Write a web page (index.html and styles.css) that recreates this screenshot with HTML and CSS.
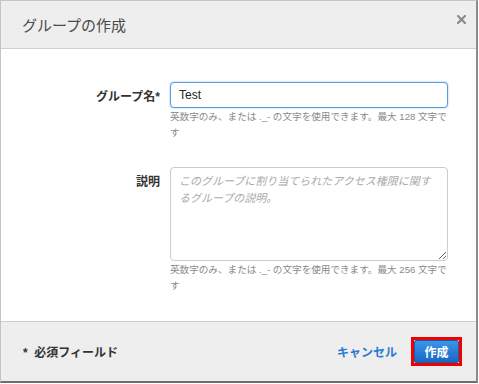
FILE: index.html
```html
<!DOCTYPE html>
<html lang="ja">
<head>
    <meta charset="UTF-8">
    <title>グループの作成</title>
    <link rel="stylesheet" href="styles.css">
</head>
<body>
    <div class="modal">
        <div class="modal-header">
            <h2 class="modal-title">グループの作成</h2>
            <button class="modal-close" aria-label="閉じる">
                <svg width="9" height="9" viewBox="0 0 9 9">
                    <path d="M1 1 L8 8 M8 1 L1 8" stroke="#8a8a8a" stroke-width="2.2" stroke-linecap="square"/>
                </svg>
            </button>
        </div>

        <div class="modal-body">
            <div class="form-row">
                <label class="form-label" for="group-name">グループ名*</label>
                <div class="form-field">
                    <input id="group-name" class="text-input" type="text" value="Test">
                    <p class="help-text">英数字のみ、または ._- の文字を使用できます。最大 128 文字です</p>
                </div>
            </div>

            <div class="form-row">
                <label class="form-label" for="group-desc">説明</label>
                <div class="form-field">
                    <textarea id="group-desc" class="text-area" placeholder="このグループに割り当てられたアクセス権限に関するグループの説明。"></textarea>
                    <p class="help-text">英数字のみ、または ._- の文字を使用できます。最大 256 文字です</p>
                </div>
            </div>
        </div>

        <div class="modal-footer">
            <span class="required-note">*&nbsp;&nbsp;必須フィールド</span>
            <div class="footer-actions">
                <a href="#" class="cancel-link">キャンセル</a>
                <span class="btn-focus">
                    <button class="btn-primary">作成</button>
                </span>
            </div>
        </div>
    </div>
</body>
</html>
```

FILE: styles.css
```css
:root {
    --panel-bg: #eeeeee;
    --line-color: #cfcfcf;
    --text-color: #444;
    --help-color: #8a8a8a;
    --link-color: #2b7bd1;
}

* {
    margin: 0;
    padding: 0;
    box-sizing: border-box;
}

body {
    font-family: 'Liberation Sans', 'Noto Sans CJK JP', sans-serif;
    color: var(--text-color);
    background-color: #fff;
}

.modal {
    width: 478px;
    height: 383px;
    border: 1px solid #c4c4c4;
    border-right: 2px solid #8c8c8c;
    border-bottom: 2px solid #6e6e6e;
    display: flex;
    flex-direction: column;
    background-color: #fff;
}

.modal-header {
    height: 48px;
    flex-shrink: 0;
    background-color: var(--panel-bg);
    border-bottom: 1px solid var(--line-color);
    display: flex;
    justify-content: space-between;
    padding: 0 10px 0 21px;
}

.modal-title {
    font-size: 15px;
    font-weight: normal;
    color: #4a4a4a;
    line-height: 50px;
}

.modal-close {
    border: none;
    background: none;
    align-self: flex-start;
    margin-top: 11px;
    cursor: pointer;
}

.modal-body {
    flex: 1;
    padding-top: 33px;
    display: flex;
    flex-direction: column;
    gap: 26px;
}

.form-row {
    display: grid;
    grid-template-columns: 159px 278px;
    gap: 10px;
}

.form-label {
    text-align: right;
    font-size: 12px;
    font-weight: bold;
    color: #333;
    padding-top: 5px;
}

.text-input {
    width: 100%;
    height: 26px;
    border: 1px solid #5b9be0;
    border-radius: 4px;
    box-shadow: 0 0 2px rgba(70, 140, 230, 0.6);
    padding: 0 8px;
    font-family: inherit;
    font-size: 12px;
    color: #222;
    outline: none;
}

.text-area {
    width: 100%;
    height: 94px;
    border: 1px solid #cccccc;
    border-radius: 4px;
    padding: 5px 8px;
    font-family: inherit;
    font-size: 11px;
    line-height: 17px;
    resize: vertical;
    display: block;
}

.text-area::placeholder {
    color: #aaaaaa;
    font-style: italic;
}

.help-text {
    font-size: 9.6px;
    line-height: 16px;
    color: var(--help-color);
    margin-top: 1px;
}

.modal-footer {
    height: 60px;
    flex-shrink: 0;
    background-color: var(--panel-bg);
    border-top: 1px solid var(--line-color);
    display: flex;
    justify-content: space-between;
    align-items: center;
    padding: 0 14px 0 22px;
}

.required-note {
    font-size: 12px;
    font-weight: bold;
    color: #333;
    margin-bottom: 1px;
}

.footer-actions {
    display: flex;
    align-items: center;
    gap: 14px;
}

.cancel-link {
    font-size: 12px;
    font-weight: bold;
    color: var(--link-color);
    text-decoration: none;
}

.btn-focus {
    border: 3px solid #f00000;
    display: flex;
}

.btn-primary {
    width: 45px;
    height: 23px;
    border: 1px solid #1b5da8;
    border-radius: 2px;
    background: linear-gradient(to bottom, #3a95e8, #1769c4);
    color: #fff;
    font-family: inherit;
    font-size: 12px;
    font-weight: bold;
    cursor: pointer;
}
```
